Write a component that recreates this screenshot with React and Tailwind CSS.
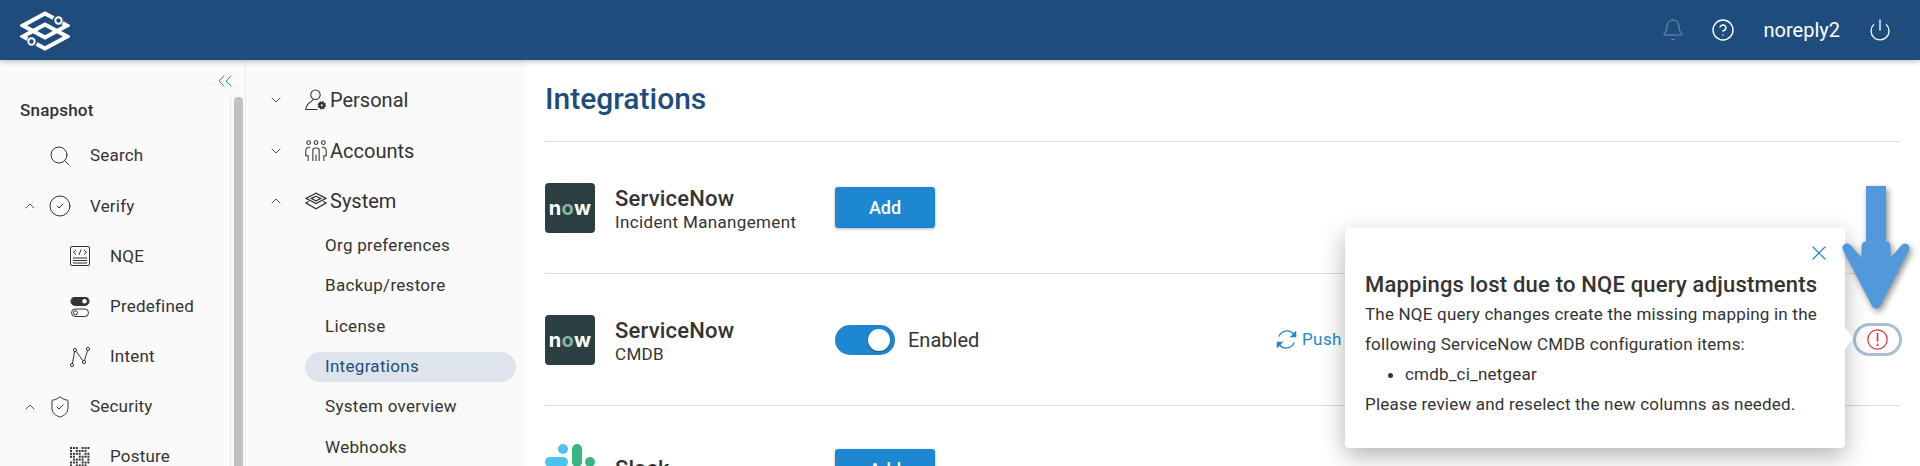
import React from 'react';
import {
  Search, ChevronUp, ChevronDown, ChevronsLeft, CircleCheck, Bell, CircleHelp, Power, X, ShieldCheck,
} from 'lucide-react';

const Logo = () => (
  <svg width="50" height="40" viewBox="0 0 50 40" fill="none" stroke="white" strokeWidth="4" className="ml-5 mt-[1px]">
    <path d="M33.5 7 L25 2.5 L3 14.5 L25 26.5 L47 14.5 L42.5 12" />
    <path d="M16.5 33 L25 37.5 L47 25.5 L25 13.5 L3 25.5 L7.5 28" />
    <circle cx="38.5" cy="9.5" r="3.2" strokeWidth="2" />
    <circle cx="11.5" cy="30.5" r="3.2" strokeWidth="2" />
  </svg>
);

const UserGear = () => (
  <svg width="22" height="22" viewBox="0 0 21 21" fill="none" stroke="#333" strokeWidth="1">
    <circle cx="10" cy="5.5" r="4.5" />
    <path d="M7.5 10 C7.5 12 1 13 .8 19.5 L12 19.5" />
    <circle cx="16" cy="15.5" r="3.2" fill="#333" strokeWidth="1.6" strokeDasharray="1.5 1" />
    <circle cx="16" cy="15.5" r="1" fill="#fafafa" stroke="none" />
  </svg>
);

const People = () => (
  <svg width="22" height="22" viewBox="0 0 21 21" fill="none" stroke="#333" strokeWidth="1">
    <circle cx="3.5" cy="2.5" r="1.8" />
    <circle cx="10.5" cy="2.5" r="1.8" />
    <circle cx="17.5" cy="2.5" r="1.8" />
    <path d="M7.5 20 V9.5 C7.5 7 13.5 7 13.5 9.5 V20 M10.5 14 V20" />
    <path d="M5 7 C2 7 .8 8 .8 10 V15 H3 V20 M16 7 C19 7 20.2 8 20.2 10 V15 H18 V20" />
  </svg>
);

const Layers = () => (
  <svg width="22" height="18" viewBox="0 0 21 17" fill="none" stroke="#333" strokeWidth="1.2">
    <path d="M10.5 1 L20 6 L10.5 11 L1 6 Z" />
    <path d="M10.5 4 L15 6.2 L10.5 8.4 L6 6.2 Z" />
    <path d="M3.5 8.8 L1 10.5 L10.5 16 L20 10.5 L17.5 8.8" />
  </svg>
);

const CodeDoc = () => (
  <svg width="20" height="20" viewBox="0 0 20 20" fill="none" stroke="#333" strokeWidth="1">
    <rect x=".5" y=".5" width="19" height="19" rx="1.5" />
    <path d="M6 4 L3.5 6.3 L6 8.5 M14 4 L16.5 6.3 L14 8.5 M11 3.5 L9 9" />
    <path d="M3 12 H17 M3 14.5 H17 M3 17 H17" />
  </svg>
);

const Toggles = () => (
  <svg width="20" height="20" viewBox="0 0 20 20" fill="none" stroke="#333" strokeWidth="1">
    <rect x="1" y="0" width="18" height="8.5" rx="4.25" fill="#333" />
    <circle cx="14.5" cy="4.25" r="2.3" fill="#fafafa" stroke="none" />
    <rect x="1.5" y="12" width="17" height="7.5" rx="3.75" />
    <circle cx="5.5" cy="15.75" r="2" />
  </svg>
);

const Nodes = () => (
  <svg width="20" height="20" viewBox="0 0 20 20" fill="none" stroke="#333" strokeWidth="1">
    <circle cx="2" cy="18" r="1.6" />
    <circle cx="5" cy="3" r="1.6" />
    <circle cx="14" cy="15" r="1.6" />
    <circle cx="18" cy="2" r="1.6" />
    <path d="M2.4 16.4 L4.6 4.6 M6 4.3 L13 13.7 M14.5 13.4 L17.5 3.6" />
  </svg>
);

const DotGrid = () => (
  <svg width="20" height="20" viewBox="0 0 20 20" fill="#333">
    {Array.from({ length: 49 }).map((_, i) => (
      i % 5 === 3 ? null : <rect key={i} x={(i % 7) * 2.9} y={Math.floor(i / 7) * 2.9} width="2" height="2" />
    ))}
  </svg>
);

const NowLogo = () => (
  <div className="flex h-[50px] w-[50px] shrink-0 items-center justify-center rounded-[4px] bg-[#2b3e41] text-[20px] leading-none font-bold tracking-[0.2px] text-white font-['Inter',sans-serif]">
    n<span className="text-[#81b5a1]">o</span>w
  </div>
);

const SlackLogo = () => (
  <svg width="50" height="50" viewBox="0 0 50 50" className="shrink-0">
    <rect x="13" y="0" width="10" height="10" rx="5" fill="#4bc3ee" />
    <rect x="0" y="13" width="23" height="10" rx="5" fill="#4bc3ee" />
    <rect x="27" y="0" width="10" height="23" rx="5" fill="#39b683" />
    <rect x="40" y="13" width="10" height="10" rx="5" fill="#39b683" />
    <rect x="27" y="27" width="23" height="10" rx="5" fill="#ecb32e" />
    <rect x="13" y="27" width="10" height="23" rx="5" fill="#e01e5a" />
  </svg>
);

const Arrow = () => (
  <svg width="68" height="124" viewBox="0 0 68 124" fill="none" className="drop-shadow-[2px_3px_3px_rgba(0,0,0,0.45)]">
    <path d="M24 0 H44 V60 H24 Z" fill="#5299dc" />
    <path d="M5 62 L34 118 L63 62 L44 84 V60 H24 V84 Z" fill="#5299dc" stroke="#5299dc" strokeWidth="9" strokeLinejoin="round" />
  </svg>
);

const snapshotRows = [
  { label: 'Search', icon: <Search size={24} strokeWidth={1} />, depth: 0 },
  { label: 'Verify', icon: <CircleCheck size={24} strokeWidth={1} />, depth: 0, open: true },
  { label: 'NQE', icon: <CodeDoc />, depth: 1 },
  { label: 'Predefined', icon: <Toggles />, depth: 1 },
  { label: 'Intent', icon: <Nodes />, depth: 1 },
  { label: 'Security', icon: <ShieldCheck size={24} strokeWidth={1} />, depth: 0, open: true },
  { label: 'Posture', icon: <DotGrid />, depth: 1 },
];

const sections = [
  { label: 'Personal', icon: <UserGear /> },
  { label: 'Accounts', icon: <People /> },
  { label: 'System', icon: <Layers />, open: true },
];

const systemLinks = ['Org preferences', 'Backup/restore', 'License', 'Integrations', 'System overview', 'Webhooks'];

export default function App() {
  return (
    <div className="relative flex h-[466px] w-[1920px] flex-col overflow-hidden bg-white font-['Roboto',sans-serif] text-[#333]">
      {/* top bar */}
      <header className="relative z-10 flex h-[60px] shrink-0 items-center bg-[#1e4d7d] shadow-[0_1px_6px_rgba(0,0,0,0.3)]">
        <Logo />
        <div className="ml-auto flex items-center text-white">
          <Bell size={24} strokeWidth={1} className="text-white/40" />
          <CircleHelp size={24} strokeWidth={1.4} className="ml-[26px]" />
          <span className="ml-[29px] text-[20px]">noreply2</span>
          <Power size={24} strokeWidth={1.3} className="ml-[28px] mr-[28px]" />
        </div>
      </header>

      <div className="flex min-h-0 flex-1">
        {/* snapshot sidebar */}
        <aside className="flex w-[245px] shrink-0 flex-col bg-[#fafafa]">
          <div className="flex h-[37px] shrink-0 items-center justify-end pr-[8px] pt-[4px]">
            <ChevronsLeft size={24} strokeWidth={1} className="text-[#1e87d1]" />
          </div>
          <div className="flex min-h-0 flex-1">
            <div className="w-[230px]">
              <div className="pl-5 pt-[4px] pb-[11px] text-[17px] leading-[19px] font-medium tracking-[0.2px]">Snapshot</div>
              {snapshotRows.map((row) => (
                <div key={row.label} className="flex h-[50.2px] items-center text-[17px] tracking-[0.2px]">
                  <span className="flex w-[48px] shrink-0 justify-center pl-[12px]">
                    {row.open && <ChevronUp size={16} strokeWidth={1.3} />}
                  </span>
                  {row.depth === 1 && <span className="w-5 shrink-0" />}
                  <span className="flex w-[24px] shrink-0 justify-center">{row.icon}</span>
                  <span className="ml-[18px]">{row.label}</span>
                </div>
              ))}
            </div>
            <div className="flex w-[15px] shrink-0 border-l border-[#e6e6e6] pl-[3px]">
              <div className="h-full w-[9px] rounded-t-[4px] bg-[#c1c1c1]" />
            </div>
          </div>
        </aside>

        {/* settings nav */}
        <nav className="w-[280px] shrink-0 border-l border-[#ececec] bg-[#fafafa] pt-[15px]">
          {sections.map((s) => (
            <div key={s.label} className="flex h-[50.6px] items-center text-[20px]">
              <span className="flex w-[59px] shrink-0 justify-center">
                {s.open ? <ChevronUp size={16} strokeWidth={1.3} /> : <ChevronDown size={16} strokeWidth={1.3} />}
              </span>
              <span className="flex w-[22px] shrink-0 justify-center">{s.icon}</span>
              <span className="ml-[3px]">{s.label}</span>
            </div>
          ))}
          <div className="mt-[4px] ml-[59px]">
            {systemLinks.map((link) => (
              <div
                key={link}
                className={`mb-[10.3px] flex h-[30px] w-[211px] items-center rounded-full pl-5 text-[17px] tracking-[0.3px] ${
                  link === 'Integrations' ? 'bg-[#dde4ec] text-[#1e4d7d]' : ''
                }`}
              >
                {link}
              </div>
            ))}
          </div>
        </nav>

        {/* main content */}
        <main className="min-w-0 flex-1 pl-5 pr-5">
          <h1 className="h-[82px] border-b border-[#dcdcdc] pt-[21px] text-[30px] leading-[36px] font-medium text-[#1e4d7d]">
            Integrations
          </h1>

          <div className="flex h-[132px] items-center border-b border-[#dcdcdc]">
            <NowLogo />
            <div className="ml-5 w-[220px] pt-[3px]">
              <div className="text-[22px] leading-[26px] font-medium tracking-[0.2px]">ServiceNow</div>
              <div className="text-[17px] leading-[21px] tracking-[0.35px]">Incident Manangement</div>
            </div>
            <button className="h-[41px] w-[100px] rounded-[3px] bg-[#1e87d1] text-[18px] font-medium text-white shadow-[0_1px_3px_rgba(0,0,0,0.3)]">
              Add
            </button>
          </div>

          <div className="flex h-[132px] items-center border-b border-[#dcdcdc]">
            <NowLogo />
            <div className="ml-5 w-[220px] pt-[3px]">
              <div className="text-[22px] leading-[26px] font-medium tracking-[0.2px]">ServiceNow</div>
              <div className="text-[17px] leading-[21px] tracking-[0.35px]">CMDB</div>
            </div>
            <div className="flex w-[440px] items-center">
              <span className="flex h-[30px] w-[60px] items-center justify-end rounded-full bg-[#1e87d1] pr-[5px]">
                <span className="h-[22px] w-[22px] rounded-full bg-white shadow-[0_1px_2px_rgba(0,0,0,0.4)]" />
              </span>
              <span className="ml-[13px] text-[20px]">Enabled</span>
            </div>
            <svg width="23" height="23" viewBox="0 0 24 24" fill="none" stroke="#1e87d1" strokeWidth="1.4">
              <path d="M4 9 A9 9 0 0 1 19.5 6.5 L21 8.5 M20 15 A9 9 0 0 1 4.5 17.5 L3 15.5" />
              <path d="M21.5 3.5 V9 H16 M2.5 20.5 V15 H8" fill="#1e87d1" />
            </svg>
            <span className="ml-[4px] text-[17px] tracking-[0.4px] text-[#1e87d1]">Push</span>
            <button className="-mr-[2px] ml-auto flex h-[33px] w-[49px] items-center justify-center rounded-full border-[3px] border-[#a9bfd6] bg-white">
              <svg width="21" height="21" viewBox="0 0 21 21" fill="none" stroke="#d9322e" strokeWidth="1.2">
                <circle cx="10.5" cy="10.5" r="9.7" />
                <path d="M10.5 4 V12.5 M10.5 14.5 V17" strokeWidth="1.6" />
              </svg>
            </button>
          </div>

          <div className="flex items-start pt-[38px]">
            <SlackLogo />
            <div className="ml-5 w-[220px] pt-[12px] text-[22px] leading-[26px] font-medium tracking-[0.2px]">Slack</div>
            <button className="mt-[5px] h-[41px] w-[100px] rounded-[3px] bg-[#1e87d1] text-[18px] font-medium text-white shadow-[0_1px_3px_rgba(0,0,0,0.3)]">
              Add
            </button>
          </div>
        </main>
      </div>

      {/* popover */}
      <div className="absolute top-[228px] left-[1345px] h-[220px] w-[500px] rounded-[4px] bg-white pt-[44px] pl-5 pr-5 shadow-[0_8px_24px_rgba(0,0,0,0.3)]">
        <X size={24} strokeWidth={1.2} className="absolute top-[13px] right-[14px] text-[#1e87d1]" />
        <span className="absolute top-[99px] -right-[8px] h-0 w-0 border-y-[11px] border-l-[8px] border-y-transparent border-l-white" />
        <div className="text-[22px] leading-[26px] font-medium tracking-[0.2px] whitespace-nowrap">Mappings lost due to NQE query adjustments</div>
        <div className="mt-[1px] text-[17px] leading-[30px] tracking-[0.2px] whitespace-nowrap">
          <p>The NQE query changes create the missing mapping in the</p>
          <p>following ServiceNow CMDB configuration items:</p>
          <ul className="list-disc pl-10">
            <li>cmdb_ci_netgear</li>
          </ul>
          <p>Please review and reselect the new columns as needed.</p>
        </div>
      </div>

      {/* annotation arrow */}
      <div className="absolute top-[186px] left-[1842px]">
        <Arrow />
      </div>
    </div>
  );
}
